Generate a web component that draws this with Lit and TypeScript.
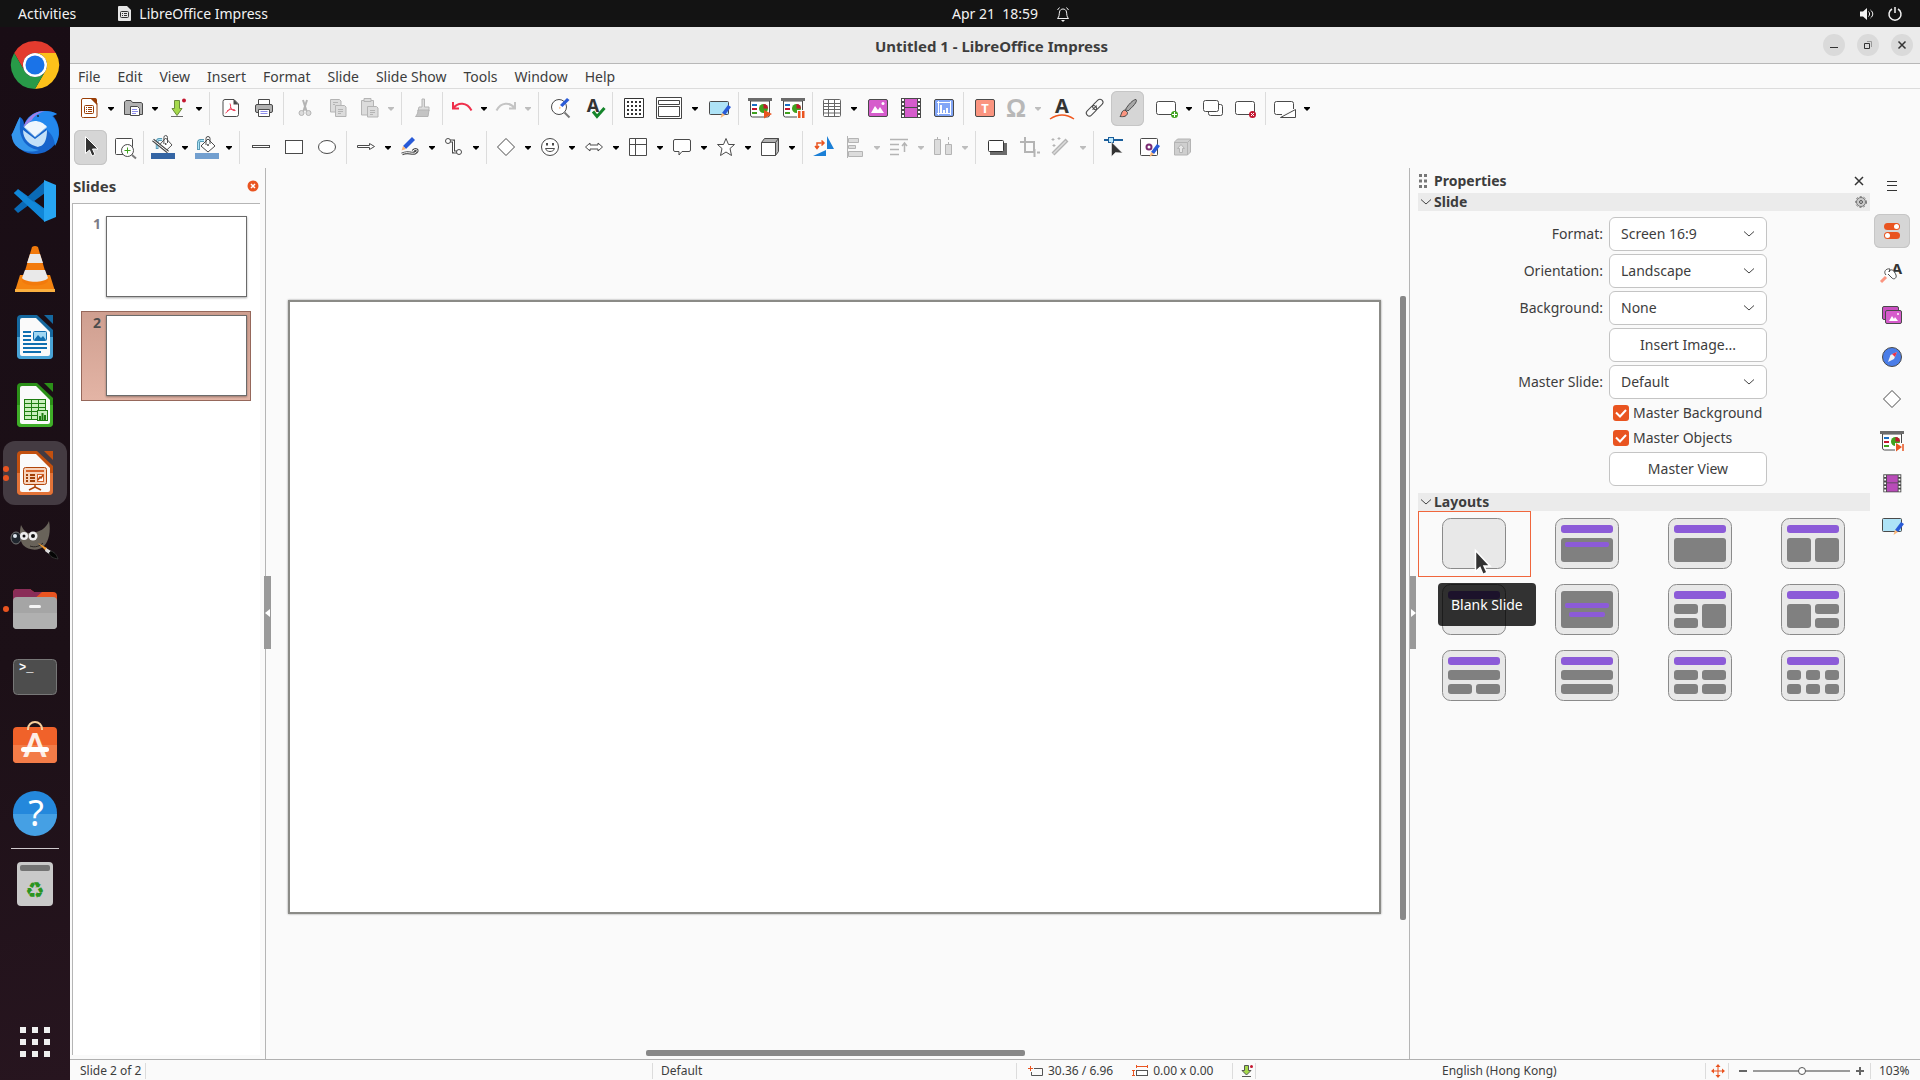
import { LitElement, html, svg, css, nothing } from "lit";
import { customElement, property } from "lit/decorators.js";
import { classMap } from "lit/directives/class-map.js";

const K = "#4a4a4a";
const G = "#b4b4b4";
const GF = "#dcdcdc";
const BLUE = "#2a5bd7";

const pencil = (x: number, y: number) => svg`<g transform="translate(${x} ${y})"><path d="M9 0l3 2-6 8-3-2z" fill=${BLUE}/><path d="M3 8l3 2-4.500 3z" fill="#fcb878"/></g>`;
const board = svg`<path d="M2.500 5v14a2 2 0 0 0 2 2h15a2 2 0 0 0 2-2V5z" fill="#fff" stroke=${K}/><path d="M0 2h24v3H0z" fill="#6b6b6b"/><path d="M4 8h5v2H4z" fill="#1a6fc4"/><path d="M4 12h5v2H4z" fill="#c3162f"/><path d="M4 16h5v2H4z" fill="#3fa21e"/><circle cx="15.500" cy="12.500" r="4.500" fill="#3fa21e"/><path d="M15.500 12.500V8a4.500 4.500 0 0 1 4.500 4.500z" fill="#c3162f"/>`;
const picture = svg`<path d="M3 17l4-7 3 4 2-3 4 6z" transform="translate(2 0)" fill="#fff"/><circle cx="17" cy="7.500" r="1.500" fill="#fff"/>`;
const bucket = svg`<path d="M3.500 15V7.500a2 2 0 0 1 2-2H9" fill="none" stroke="#5a9bb5" stroke-width="3"/><path d="M3.500 14V7.500a2 2 0 0 1 2-2H9" fill="none" stroke="#aee6fb"/><path d="M13 4l7 7-7 6-7-6z" fill="#fff" stroke=${K}/><path d="M11 10V3.500a2 2 0 0 1 4 0V9" fill="none" stroke=${K}/><circle cx="13" cy="10" r="1" fill=${K}/>`;
const film = (c: string) => svg`<path d="M2 2h20v20H2z" fill=${K}/><path d="M6 3h12v8H6zM6 12h12v9H6z" fill=${c}/><path d="M4 3v18M20 3v18" stroke="#fff" stroke-width="2" stroke-dasharray="2 2"/>`;
const noteScreen = svg`<rect x="2.500" y="5.500" width="19" height="13" rx="1" fill="#aee3f7" stroke=${K}/>${pencil(12, 9)}`;

const icons: Record<string, unknown> = {
  new: svg`<path d="M6 2.500h9l5 5V20a1.500 1.500 0 0 1-1.500 1.500h-12A1.500 1.500 0 0 1 4.500 20V4A1.500 1.500 0 0 1 6 2.500z" fill="#fff" stroke="#9a3e06"/><path d="M13 2h5.500A2 2 0 0 1 20 4v5z" fill="#9a3e06"/><rect x="7.500" y="9.500" width="9" height="8" rx="1" fill="none" stroke="#9a3e06"/><path d="M9 11.500h1M11 11.500h4M9 13.500h1M11 13.500h4M9 15.500h1M11 15.500h4" stroke="#9a3e06"/>`,
  open: svg`<path d="M3.500 18.500V6l1.500-1.500h5l1.500 2H20l1.500 1V18.500z" fill="#b2b2b2" stroke=${K}/><path d="M9.500 10.500h7l2 2v7h-9z" fill="#fff" stroke=${K}/><path d="M11 13.500h5M11 15.500h6M11 17.500h4" stroke="#8d8dea"/>`,
  save: svg`<path d="M9.500 4.500h5v8h2.500l-5 7-5-7h2.500z" fill="#a4d94b" stroke="#6a8a3a"/><path d="M6 20.500h12" stroke="#6b6b6b"/><circle cx="19" cy="4.500" r="2" fill="#c3162f"/>`,
  pdf: svg`<path d="M6 3.500h9l4.500 4.500v10.500a2 2 0 0 1-2 2H6a2 2 0 0 1-2-2v-13a2 2 0 0 1 2-2z" fill="#fff" stroke=${K}/><path d="M14.500 3v5.500h5z" fill=${K}/><path d="M11 7.500c1.500 4 .5 6-4.500 9.500M11.500 11c1 3 3 4 5 3.500M8 15c2-2 5-2 8-1" fill="none" stroke="#ee3e58"/>`,
  print: svg`<path d="M6.500 9V3.500h11V9" fill="#fff" stroke=${K}/><rect x="3.500" y="8.500" width="17" height="8" rx="1.500" fill="#b2b2b2" stroke=${K}/><path d="M6.500 13.500h11v7h-11z" fill="#fff" stroke=${K}/><path d="M8.500 15.500h7M8.500 17.500h7" stroke="#8d8dea"/>`,
  cut: svg`<path d="M10 4l3.500 11M14 4l-3.500 11" stroke=${G} stroke-width="2"/><circle cx="8.500" cy="17" r="2.500" fill=${GF} stroke=${G}/><circle cx="15.500" cy="17" r="2.500" fill=${GF} stroke=${G}/>`,
  copy: svg`<path d="M4.500 3.500h9l1.500 1.500v11H4.500z" fill=${GF} stroke=${G}/><path d="M9.500 9.500h9l1.500 1.500v9.500H9.500z" fill=${GF} stroke=${G}/><path d="M7 6.500h5M7 8.500h2M12 13.500h5M12 15.500h5M12 17.500h3" stroke=${G}/>`,
  paste: svg`<path d="M4.500 4.500h12V19h-12z" fill=${GF} stroke=${G}/><path d="M7 2.500h7v3H7z" fill=${GF} stroke=${G}/><path d="M10.500 10.500h9l1.500 1.500v9H10.500z" fill=${GF} stroke=${G}/><path d="M13 14.500h5M13 16.500h5M13 18.500h3" stroke=${G}/>`,
  clone: svg`<path d="M11 3h2.500v8H18v4H7l1-4h3z" fill=${GF} stroke=${G}/><path d="M7 14h11l-1 6.500H4.500C6 19 7 17 7 14z" fill="#c4c4c4" stroke=${G}/>`,
  undo: svg`<path d="M3 6v6.500h6M3.500 12C8 6 17 6 21.500 14.500" fill="none" stroke="#ef2f4b" stroke-width="2"/>`,
  redo: svg`<path d="M21 6v6.500h-6M20.500 12C16 6 7 6 2.500 14.500" fill="none" stroke="#c4c4c4" stroke-width="2"/>`,
  find: svg`<circle cx="11" cy="11" r="7.500" fill="#fff" stroke=${K}/><path d="M16.500 16.500l5 5" stroke="#7a7a7a" stroke-width="2"/><path d="M13 12l-2 1 .5-2.500z" fill="#fcb878"/><path d="M12 9l7-7 2.500 2-7 7z" fill=${BLUE}/>`,
  spell: svg`<text x="12" y="16" font-size="18" font-weight="bold" fill="#333" text-anchor="middle" style="font-family:'Noto Sans',sans-serif">A</text><path d="M12 15.500l4 5L23.500 12" fill="none" stroke="#15852b" stroke-width="3"/>`,
  grid: svg`<path d="M2.500 2.500h19v19h-19z" fill="#fff" stroke="#333"/><path d="M5 6h14M5 10h14M5 14h14M5 18h14" stroke="#333" stroke-width="2" stroke-dasharray="2 2"/>`,
  display: svg`<path d="M-.5 1.500h25v21h-25zM1.500 4.500h21v4h-21zM1.500 10.500h21v10h-21z" fill="#fff" stroke="#444"/>`,
  master: noteScreen,
  play: svg`${board}<path d="M16 14l8 4-8 4.500z" fill="#e95420"/>`,
  pause: svg`${board}<path d="M16 14h8v9h-8z" fill="#fafafa"/><path d="M17 15h2.500v7H17zM21 15h2.500v7H21z" fill="#e95420"/>`,
  table: svg`<rect x="3.500" y="3.500" width="17" height="17" rx="1" fill="#fff" stroke="#666"/><path d="M4 7.500h16M4 10.500h16M4 13.500h16M4 17h16M8.500 4v16M14.500 4v16" stroke="#666"/>`,
  image: svg`<rect x="2.500" y="3.500" width="19" height="17" rx="1.500" fill="#d65ccc" stroke=${K}/>${picture}`,
  film: film("#d65ccc"),
  chart: svg`<rect x="2.500" y="3.500" width="19" height="17" rx="1.500" fill="#82a6f7" stroke=${K}/><path d="M5 6.500h14M5 17.500h14M6.500 5v14M18.500 5v14" stroke="#fff"/><path d="M9 17V9M12 17v-3M15 17v-5" stroke="#fff" stroke-width="2"/>`,
  textbox: svg`<rect x="2.500" y="3.500" width="19" height="17" rx="1.500" fill="#fb9580" stroke=${K}/><text x="12" y="17" font-size="13" font-weight="bold" fill="#fff" text-anchor="middle" style="font-family:'Noto Sans',sans-serif">T</text>`,
  omega: svg`<text x="12" y="21" font-size="25" font-weight="bold" fill="#b8b8b8" text-anchor="middle" style="font-family:'Liberation Sans',sans-serif">Ω</text>`,
  fontwork: svg`<text x="12" y="16.500" font-size="20" font-weight="bold" fill="#333" text-anchor="middle" style="font-family:'Noto Sans',sans-serif">A</text><path d="M0 23q12-8 24 0" fill="none" stroke="#f0561d" stroke-width="1.500"/>`,
  link: svg`<g transform="rotate(-45 12 12)" fill="none" stroke=${K}><rect x="1.500" y="8.500" width="12" height="6" rx="3"/><rect x="10.500" y="8.500" width="12" height="6" rx="3"/><path d="M9 11.500h6"/></g>`,
  brush: svg`<path d="M9.500 13.500C12 9 17 3.500 20 3.500c2 2-3.500 7.500-8 11.500z" fill="#a8a8a8" stroke=${K}/><path d="M4 20.500c1.500-1 1-6 5-6.500l2.500 2.500c0 4-4 4.500-7.500 4z" fill="#fb9580" stroke=${K}/>`,
  newslide: svg`<rect x="1.500" y="5.500" width="19" height="13" rx="2" fill="#fff" stroke=${K}/><circle cx="19.500" cy="18.500" r="3.500" fill="#3fa21e"/><path d="M19.500 16v5M17 18.500h5" stroke="#fff"/>`,
  dup: svg`<rect x="7.500" y="8.500" width="14" height="11" rx="2" fill="#fff" stroke=${K}/><rect x="2.500" y="4.500" width="15" height="11" rx="2" fill="#fff" stroke=${K}/>`,
  del: svg`<rect x="1.500" y="5.500" width="19" height="13" rx="2" fill="#fff" stroke=${K}/><circle cx="18.500" cy="18.500" r="3.500" fill="#c3162f"/><path d="M17 17l3 3m0-3l-3 3" stroke="#fff"/>`,
  layout: svg`<path d="M9 18.500H3.500a2 2 0 0 1-2-2v-9a2 2 0 0 1 2-2h15a2 2 0 0 1 2 2V13" fill="#fff" stroke=${K}/><path d="M7.500 21.500h15V13.500z" fill="#fff" stroke=${K}/>`,

  select: svg`<path d="M6.500 1.500v17l4-3.500 2.500 6 3-1.500-2.500-5.500h5.500z" fill="#333" stroke="#fff"/>`,
  zoom: svg`<rect x="3.500" y="3.500" width="17" height="16" rx="1" fill="#fff" stroke=${K}/><circle cx="15.500" cy="15.500" r="6" fill="#fff" stroke=${K}/><path d="M12.500 15.500h6M15.500 12.500v6" stroke="#3fa21e"/><path d="M20 20l4 3.500" stroke="#7a7a7a" stroke-width="2"/>`,
  linecolor: svg`<g transform="translate(3 -1) scale(.9 1)">${bucket}</g><path d="M2 5l15 12" stroke=${K} stroke-width="3"/><path d="M2 5l15 12" stroke="#fff"/><path d="M0 18h24v6H0z" fill="#3465a4"/>`,
  fillcolor: svg`${bucket}<path d="M0 18h24v6H0z" fill="#729fcf"/>`,
  line: svg`<rect x="3.500" y="10.500" width="17" height="2" fill="#fff" stroke=${K}/>`,
  rect: svg`<rect x="3.500" y="5.500" width="17" height="13" fill="#fff" stroke=${K}/>`,
  ellipse: svg`<ellipse cx="12" cy="12" rx="8.500" ry="6.500" fill="#fff" stroke=${K}/>`,
  arrow: svg`<path d="M3.500 10.500h12v-2l5 3-5 3v-2h-12z" fill="#fff" stroke=${K}/>`,
  curve: svg`<path d="M4 19c5-3 9 0 13-1 5-3 0-5-2-2" fill="none" stroke=${K} stroke-width="3"/><path d="M4 19c5-3 9 0 13-1 5-3 0-5-2-2" fill="none" stroke="#fff"/><path d="M14 2l3 3-9 9-3-3z" fill=${BLUE}/><path d="M5 11l3 3-4.500 1.500z" fill="#fcb878"/>`,
  connector: svg`<path d="M7 6h4.500v11H16" fill="none" stroke=${K} stroke-width="3"/><path d="M7 6h4.500v11H16" fill="none" stroke="#fff"/><circle cx="6" cy="6" r="2.500" fill="#fff" stroke=${K}/><circle cx="17" cy="17" r="2.500" fill="#fff" stroke=${K}/>`,
  diamond: svg`<path d="M12 3.500l8.500 8.500-8.500 8.500L3.500 12z" fill="#fff" stroke=${K}/>`,
  smile: svg`<circle cx="12" cy="12" r="8.500" fill="#fff" stroke=${K}/><path d="M9 8v2.500M15 8v2.500" stroke=${K} stroke-width="2"/><path d="M7.500 13.500h9c-1 4-8 4-9 0z" fill="#fff" stroke=${K}/>`,
  dbl: svg`<path d="M3.500 12L8 8v2h8V8l4.500 4L16 16v-2H8v2z" fill="#fff" stroke=${K}/>`,
  flow: svg`<path d="M3.500 3.500h17v17h-17zM9.500 3.500v17M3.500 9.500h17" fill="#fff" stroke=${K}/>`,
  callout: svg`<path d="M5 4.500h14a1.500 1.500 0 0 1 1.500 1.500v9a1.500 1.500 0 0 1-1.500 1.500h-7L9 20v-3.500H5A1.500 1.500 0 0 1 3.500 15V6A1.500 1.500 0 0 1 5 4.500z" fill="#fff" stroke=${K}/>`,
  star: svg`<path d="M12 3.500l2.500 6h6l-4.500 4 1.500 7L12 17l-5.500 3.500L8 13.500l-4.500-4h6z" fill="#fff" stroke=${K}/>`,
  cube: svg`<path d="M3.500 7.500l3-4h14v13l-3 4z" fill="#b2b2b2" stroke=${K}/><path d="M3.500 7.500h14v13h-14zM17.500 7.500l3-4" fill="#fff" stroke=${K}/>`,
  rotate: svg`<path d="M15 1v13h7zM1 21h13v-6z" fill="#1b7fd6"/><path d="M5 13V8h6M3 11l2 2.500L7 11M9.500 5.500L12 8l-2.500 2.500" fill="none" stroke="#e95420" stroke-width="1.500"/>`,
  align: svg`<path d="M4.500 1v22" stroke=${G}/><path d="M5.500 3.500h10v4h-10zM5.500 10.500h7v3h-7zM5.500 16.500h14v5h-14z" fill=${GF} stroke=${G}/>`,
  arrange: svg`<path d="M3 4.500h18M3 9.500h9M3 14.500h9M3 19.500h9" stroke=${G} stroke-width="1.500"/><path d="M17.500 17V9M15 11l2.500-3L20 11" stroke=${G} fill="none" stroke-width="1.500"/>`,
  distribute: svg`<path d="M6.500 2v20M17.500 2v20" stroke=${G} stroke-dasharray="3 2"/><path d="M3.500 4.500h6v15h-6zM14.500 9.500h6v10h-6z" fill=${GF} stroke=${G}/>`,
  shadow: svg`<path d="M5 8h17v12H5z" fill="#6b6b6b"/><rect x="3.500" y="5.500" width="15" height="11" rx="1" fill="#fff" stroke="#333"/>`,
  crop: svg`<path d="M2 7h14v10M7 2v15h9M16.500 14v8M19 17.500h3" fill="none" stroke=${G} stroke-width="2"/>`,
  wand: svg`<path d="M4 19L18 5" stroke=${G} stroke-width="4"/><path d="M4.500 18.500L17 6" stroke=${GF} stroke-width="1.500"/><path d="M4 3v3M2.500 4.500h3M10 2v3M8.500 3.500h3M5 9v3M3.500 10.500h3" stroke=${G}/>`,
  points: svg`<path d="M1 5h19" stroke="#1b5f9c" stroke-width="2"/><rect x="5.500" y="2.500" width="5" height="5" fill="#bfe9fb" stroke="#1b5f9c"/><path d="M8.500 7v14.500l4-4 7 .5z" fill="#333" stroke="#fff" stroke-width=".5"/>`,
  glue: svg`<rect x="4.500" y="3.500" width="17" height="17" rx="1" fill="#fff" stroke=${K}/><circle cx="13" cy="12" r="2.500" fill="none" stroke="#7a2a72" stroke-width="2"/>${pencil(12, 9)}`,
  extrude: svg`<g transform="translate(2 0)"><path d="M3.500 7l3-3h13v13l-3 3h-13z" fill="#cfcfcf" stroke=${G}/><path d="M3.500 7.500h13V20M16.500 7.500l3-3" fill="none" stroke=${G}/><path d="M8.500 17.500v-4h-2l3.500-4 3.500 4h-2v4z" fill="#e8e8e8" stroke=${G}/></g>`,

  menu: svg`<path d="M7 7.500h10M7 11.500h10M7 16.500h10" stroke="#333"/>`,
  props: svg`<rect x="4" y="4" width="16" height="7" rx="3.500" fill="#e95420"/><rect x="4" y="13" width="16" height="7" rx="3.500" fill="#e95420"/><circle cx="16.500" cy="7.500" r="2.500" fill="#fff"/><circle cx="7.500" cy="16.500" r="2.500" fill="#fff"/>`,
  styles: svg`<text x="17" y="13" font-size="15" font-weight="bold" fill="#333" text-anchor="middle" style="font-family:'Noto Sans',sans-serif">A</text><path d="M6 14c-3-3 0-7 4-6l-1 3c2-4 5-2 7 3 1 3-2 5-4 3l-4-4" fill="#fff" stroke=${K}/><path d="M6 16l-5 5" stroke="#fb9580" stroke-width="3"/>`,
  gallery: svg`<rect x="2.500" y="3.500" width="16" height="13" rx="1.500" fill="#c94fc0" stroke=${K}/><rect x="5.500" y="7.500" width="16" height="13" rx="1.500" fill="#d65ccc" stroke=${K}/><path d="M9 18l3-5 2 3 1-2 3 4z" fill="#fff"/><circle cx="18" cy="11" r="1" fill="#fff"/>`,
  navigator: svg`<circle cx="12" cy="12" r="9.500" fill="#4a7de8" stroke=${K}/><path d="M17 7l-3 7-6 3 2.500-7z" fill="#f2f2f2"/><path d="M17 7l-2 5-3-3z" fill="#ed3146"/>`,
  transition: svg`${board}<path d="M15 14h9v9h-9z" fill="#fafafa"/><path d="M16 14l6 4-6 4.500z" fill="#e95420"/><path d="M23 15v7" stroke="#e95420" stroke-width="1.500"/>`,
  animation: svg`<g transform="translate(1.500 1.500) scale(.9)">${film("#b84bb8")}</g>`,
};

const office = (dark: string, light: string, inner: unknown) => svg`<g transform="translate(0 -1)">
  <path d="M10 3h16l16 15v25a4 4 0 0 1-4 4H10a4 4 0 0 1-4-4V7a4 4 0 0 1 4-4z" fill=${dark}/>
  <path d="M6 25h36v18a4 4 0 0 1-4 4H10a4 4 0 0 1-4-4z" fill=${light}/>
  <path d="M11 6h14l14 14v22a2 2 0 0 1-2 2H11a2 2 0 0 1-2-2V8a2 2 0 0 1 2-2z" fill="#fafafa"/>
  <path d="M33 3h9v9z" fill=${dark}/>${inner}</g>`;

const dockIcons: Record<string, unknown> = {
  chrome: svg`<path d="M24 12H44.800A24 24 0 0 0 3.200 12L13.600 30A12 12 0 0 1 24 12z" fill="#e33b2e"/><path d="M44.800 12A24 24 0 0 1 24 48L34.400 30A12 12 0 0 0 24 12z" fill="#fcc11a"/><path d="M3.200 12A24 24 0 0 0 24 48L34.400 30A12 12 0 0 1 13.600 30z" fill="#289a48"/><circle cx="24" cy="24" r="12" fill="#fff"/><circle cx="24" cy="24" r="9.500" fill="#1a73e8"/>`,
  thunderbird: svg`<g transform="translate(0 1)"><path d="M1 24c2-3 4-10 8-17 3 2 4 4 4 8 3-8 9-13 19-14 6 0 11 1 14 3l-4 2c4 4 6 10 6 18a24 23 0 0 1-47 3c-1-2-1-3 0-3z" fill="#1664cc"/><path d="M14 13C18 5 25 1 34 1c5 0 9 1 12 3l-5 2c8 8 9 20 3 30 0-12-12-24-30-23z" fill="#2388ee"/><path d="M12 17C18 5 25 1 34 1c-7 2-11 5-13 9z" fill="#9f7fe8"/><path d="M1 24c2-3 4-10 8-17 1 6-2 12 2 21 3 7 9 11 17 12-14 5-28-3-27-16z" fill="#3596ec"/><path d="M12 20l12 9 12-9c0 8-2 14-6 16 0 0-2 0-3 1-8-2-15-7-15-17z" fill="#c3e0f8"/><path d="M13 17c3-4 7-6 11-6s9 2 12 6l-12 10z" fill="#eef6fd"/><path d="M13 17l11 10 12-10" fill="none" stroke="#8fbdea"/><circle cx="27" cy="6" r="1" fill="#123"/></g>`,
  vscode: svg`<path d="M3 16l4-4 27 20v12z" fill="#0f7fd0"/><path d="M34 4v12L7 36l-4-4z" fill="#0a6ab6"/><path d="M33 3l12 5v32l-12 5z" fill="#27a5f2"/><path d="M3 16l4-3 26 20v11z" fill="#1187d8"/>`,
  vlc: svg`<path d="M9 30h30l5 16H4z" fill="#f58410"/><path d="M4 44h40v3H4z" fill="#fbb040"/><path d="M21 2q3-2 6 0l10 34c-3 6-23 6-26 0z" fill="#f27a0c"/><path d="M19 9h10l3 9H16zM14 25h20l3 8c-4 5-22 5-26 0z" fill="#e9e9e9"/>`,
  writer: office("#15689f", "#49a3d6", svg`<path d="M12 20h8M12 24h8M12 28h8M12 32h24M12 36h24M12 40h18" stroke="#0f6fb0" stroke-width="2"/><rect x="22.500" y="19.500" width="13" height="9" rx="1" fill="#9fd7f3" stroke="#0f6fb0"/><path d="M23 28l4-5 3 3 2-2 3 4z" fill="#0f6fb0"/>`),
  calc: office("#2b9018", "#3fae28", svg`<rect x="13.500" y="19.500" width="21" height="20" fill="#c9efbd" stroke="#1e7d10"/><path d="M14 23.500h20M14 27.500h20M14 31.500h20M14 35.500h20M20.500 20v19M27.500 20v19" stroke="#1e7d10"/><rect x="26.500" y="30.500" width="10" height="10" fill="#c9efbd" stroke="#1e7d10"/><path d="M29 40v-4M31.500 40v-7M34 40v-5" stroke="#1e7d10" stroke-width="2"/>`),
  impress: office("#c2500f", "#e27338", svg`<rect x="12.500" y="19.500" width="23" height="17" rx="2" fill="#f7d3bb" stroke="#b0450a"/><path d="M15 23h18" stroke="#d4622a" stroke-width="2"/><path d="M15 27h2M15 30h2M15 33h2M19 27h5M19 30h5M19 33h5" stroke="#a04008" stroke-width="2"/><rect x="26.500" y="26.500" width="6" height="7" fill="#fff" stroke="#d4622a"/><path d="M27 32l2-3 1 1 2-3M24 37v2l-6 3M24 39l6 3" stroke="#b0450a" fill="none" stroke-width="1.500"/>`),
  gimp: svg`<path d="M10 8c3 6 6 9 11 8 7-1 14-4 17-12 2 10 0 20-5 25-6 6-16 4-21-1-3-4-4-12-2-20z" fill="#69635a"/><ellipse cx="5" cy="21" rx="5" ry="6" fill="#20262e" stroke="#777"/><circle cx="4" cy="19" r="2" fill="#dfe8f0"/><circle cx="13" cy="19" r="4" fill="#eee"/><circle cx="13" cy="19" r="1.500" fill="#111"/><circle cx="22" cy="19" r="4.500" fill="#eee"/><circle cx="22" cy="19" r="2" fill="#111"/><path d="M19 29c5 2 10 0 13-3" fill="none" stroke="#2a2622"/><path d="M27 26l9 5-1 3z" fill="#f29a2e"/><path d="M35 31l5 3-2 3-4-3z" fill="#ddd"/><path d="M40 34c5 2 6 5 7 8-5-1-8-2-9-6z" fill="#050505" stroke="#333"/>`,
  files: svg`<path d="M2 8a4 4 0 0 1 4-4h13l4 3h19a4 4 0 0 1 4 4v15H2z" fill="#e95420"/><path d="M2 8a4 4 0 0 1 4-4h13l4 3h8L12 24H2z" fill="#8a2d58"/><rect x="2" y="12" width="44" height="32" rx="4" fill="#a5a5a5"/><path d="M2 28h44v12a4 4 0 0 1-4 4H6a4 4 0 0 1-4-4z" fill="#b0b0b0"/><rect x="18" y="20" width="12" height="3" rx="1.500" fill="#f5f5f5"/>`,
  terminal: svg`<rect x="2.500" y="6.500" width="43" height="35" rx="4" fill="#4d4d4d" stroke="#777"/><text x="8" y="18" font-size="12" font-weight="bold" fill="#fff" style="font-family:'Liberation Mono',monospace">&gt;_</text>`,
  software: svg`<g transform="translate(0 -5)"><rect x="2" y="11" width="44" height="36" rx="4" fill="#f0622a"/><path d="M2 29h44v14a4 4 0 0 1-4 4H6a4 4 0 0 1-4-4z" fill="#f37c48"/><path d="M17 14v-1a7 7 0 0 1 14 0v1" fill="none" stroke="#f7cf9d" stroke-width="2"/><text x="24" y="41" font-size="33" font-weight="bold" fill="#fdeee6" text-anchor="middle" style="font-family:Lato,sans-serif">A</text><rect x="10" y="31" width="28" height="5" rx="2.500" fill="#fff"/></g>`,
  help: svg`<circle cx="24" cy="24" r="22" fill="#2488dc"/><path d="M2 25h44a22 22 0 0 1-44 0z" fill="#45a0e4"/><text x="25" y="37" font-size="36" fill="#fff" text-anchor="middle" style="font-family:'Noto Sans',sans-serif">?</text>`,
  trash: svg`<rect x="6" y="2" width="36" height="44" rx="4" fill="#c9c9c9"/><rect x="9" y="5" width="30" height="6" rx="2" fill="#737373"/><text x="24" y="38" font-size="22" fill="#2a9420" text-anchor="middle" style="font-family:'DejaVu Sans',sans-serif">♻</text>`,
  apps: svg`<path d="M9 12h30M9 24h30M9 36h30" stroke="#f0f0f0" stroke-width="6" stroke-dasharray="6 6"/>`,
};

type Tool = { icon?: string; label?: string; kind: "button" | "drop" | "wide" | "sep" | "space"; off?: boolean; on?: boolean };
const b = (icon: string, label: string, x: Partial<Tool> = {}): Tool => ({ kind: "button", icon, label, ...x });
const d = (icon: string, label: string, x: Partial<Tool> = {}): Tool => ({ kind: "drop", icon, label, ...x });
const sep: Tool = { kind: "sep" };
const off = { off: true };

const standardBar: Tool[] = [
  d("new", "New"), d("open", "Open"), d("save", "Save"), sep,
  b("pdf", "Export as PDF"), b("print", "Print"), sep,
  b("cut", "Cut", off), b("copy", "Copy", off), d("paste", "Paste", off), sep,
  b("clone", "Clone Formatting", off), sep,
  d("undo", "Undo"), d("redo", "Redo", off), sep,
  b("find", "Find and Replace"), b("spell", "Spelling"), sep,
  b("grid", "Display Grid"), d("display", "Display Views", { kind: "wide" }), b("master", "Master Slide"), sep,
  b("play", "Start from First Slide"), b("pause", "Start from Current Slide"), sep,
  d("table", "Table"), b("image", "Insert Image"), b("film", "Insert Audio or Video"), b("chart", "Insert Chart"), sep,
  b("textbox", "Insert Text Box"), d("omega", "Special Characters", off), b("fontwork", "Fontwork"), b("link", "Hyperlink"),
  b("brush", "Show Draw Functions", { on: true }), { kind: "space" },
  d("newslide", "New Slide"), b("dup", "Duplicate Slide"), b("del", "Delete Slide"), sep,
  d("layout", "Slide Layout"),
];
const drawingBar: Tool[] = [
  b("select", "Select", { on: true }), b("zoom", "Zoom & Pan"), sep,
  d("linecolor", "Line Color"), d("fillcolor", "Fill Color"), sep,
  b("line", "Line"), b("rect", "Rectangle"), b("ellipse", "Ellipse"), sep,
  d("arrow", "Lines and Arrows"), d("curve", "Curves and Polygons"), d("connector", "Connectors"), sep,
  d("diamond", "Basic Shapes"), d("smile", "Symbol Shapes"), d("dbl", "Block Arrows"), d("flow", "Flowchart"),
  d("callout", "Callouts"), d("star", "Stars and Banners"), d("cube", "3D Objects"), sep,
  b("rotate", "Rotate"), d("align", "Align", off), d("arrange", "Arrange", off), d("distribute", "Distribute", off), sep,
  b("shadow", "Shadow"), b("crop", "Crop", off), d("wand", "Filter", off), sep,
  b("points", "Edit Points"), b("glue", "Glue Points"), b("extrude", "Toggle Extrusion", off),
];

const dockItems = [
  ["chrome", "Google Chrome"], ["thunderbird", "Thunderbird"], ["vscode", "Visual Studio Code"], ["vlc", "VLC"],
  ["writer", "LibreOffice Writer"], ["calc", "LibreOffice Calc"], ["impress", "LibreOffice Impress"], ["gimp", "GIMP"],
  ["files", "Files"], ["terminal", "Terminal"], ["software", "Ubuntu Software"], ["help", "Help"],
];

/* Each layout is a list of [kind, x, y, width, height] blocks on a 64 x 51 card. */
type Block = ["p" | "g", number, number, number, number];
const title: Block = ["p", 6, 7, 52, 8];
const layouts: [string, Block[]][] = [
  ["Blank Slide", []],
  ["Title Slide", [title, ["g", 6, 20, 52, 24], ["p", 10, 24, 44, 5]]],
  ["Title, Content", [title, ["g", 6, 20, 52, 24]]],
  ["Title and 2 Content", [title, ["g", 6, 20, 24, 24], ["g", 34, 20, 24, 24]]],
  ["Title Only", [title]],
  ["Centered Text", [["g", 6, 7, 52, 37], ["p", 10, 19, 44, 5], ["p", 14, 28, 36, 5]]],
  ["Title, 2 Content and Content", [title, ["g", 6, 20, 24, 10], ["g", 6, 34, 24, 10], ["g", 34, 20, 24, 24]]],
  ["Title, Content and 2 Content", [title, ["g", 6, 20, 24, 24], ["g", 34, 20, 24, 10], ["g", 34, 34, 24, 10]]],
  ["Title, Content over 2 Content", [title, ["g", 6, 20, 52, 10], ["g", 6, 34, 24, 10], ["g", 34, 34, 24, 10]]],
  ["Title, Content over Content", [title, ["g", 6, 20, 52, 10], ["g", 6, 34, 52, 10]]],
  ["Title, 4 Content", [title, ["g", 6, 20, 24, 10], ["g", 34, 20, 24, 10], ["g", 6, 34, 24, 10], ["g", 34, 34, 24, 10]]],
  ["Title, 6 Content", [title, ...[20, 34].flatMap((y) => [6, 25, 44].map((x): Block => ["g", x, y, 14, 10]))]],
];

const shared = css`
  * { box-sizing: border-box; }
  button, select, input { font: inherit; color: inherit; margin: 0; padding: 0; border: 0; background: none; }
  svg { display: block; flex: none; overflow: visible; }
`;

@customElement("tool-bar")
class ToolBar extends LitElement {
  @property({ attribute: false }) items: Tool[] = [];
  static styles = [shared, css`
    :host { display: block; }
    .bar { display: flex; height: 35px; align-items: center; }
    .tool { display: flex; align-items: center; justify-content: center; flex: none; width: 33px; height: 35px; padding: 0 0 1px 1px; border-radius: 6px; }
    .tool.drop { width: 30px; padding-left: 0; }
    .tool.wide { width: 38px; }
    .tool.on { background: #d6d6d6; box-shadow: inset 0 0 0 1px #c6c6c6; }
    .more { display: flex; align-items: center; justify-content: center; flex: none; width: 14px; height: 35px; padding-bottom: 1px; color: #000; }
    .more[disabled] { color: #bdbdbd; }
    .sep { flex: none; width: 1px; height: 33px; margin: 0 4px 0 3px; background: #dcdcdc; }
    .space { flex: none; width: 8px; }
  `];
  render() {
    return html`<div class="bar" role="toolbar">${this.items.map((t) => {
      if (t.kind === "sep") return html`<span class="sep"></span>`;
      if (t.kind === "space") return html`<span class="space"></span>`;
      const drop = t.kind !== "button";
      return html`<button class=${classMap({ tool: true, drop, wide: t.kind === "wide", on: !!t.on })} aria-label=${t.label!} ?disabled=${!!t.off}>
          <svg width="24" height="24" viewBox="0 0 24 24">${icons[t.icon!]}</svg></button>
        ${drop ? html`<button class="more" aria-label="${t.label} options" ?disabled=${!!t.off}>
          <svg width="8" height="8" viewBox="0 0 8 8"><path d="M1 3h6v1L4 7 1 4z" fill="currentColor"/></svg></button>` : nothing}`;
    })}</div>`;
  }
}

@customElement("side-dock")
class SideDock extends LitElement {
  static styles = [shared, css`
    :host { display: block; flex: none; width: 70px; background: linear-gradient(170deg, #190d15 0%, #1c1017 60%, #27151f 100%); }
    .dock { display: flex; flex-direction: column; align-items: center; height: 100%; padding: 6px 0 6px; gap: 4px; }
    .app { position: relative; display: flex; align-items: center; justify-content: center; flex: none; width: 64px; height: 64px; border-radius: 12px; }
    .app.on { background: #443b42; }
    .dots { position: absolute; left: 0; display: grid; gap: 3px; }
    .dot { width: 6px; height: 6px; border-radius: 50%; background: #e95420; }
    .rule { flex: none; width: 48px; height: 1px; margin: -1px 0; background: #cfcacd; }
    .apps { margin-top: auto; }
  `];
  render() {
    const dots: Record<string, number> = { impress: 2, files: 1 };
    return html`<nav class="dock" aria-label="Dock">
      ${dockItems.map(([id, label]) => html`<button class=${classMap({ app: true, on: id === "impress" })} aria-label=${label}>
        ${dots[id] ? html`<span class="dots">${Array.from({ length: dots[id] }, () => html`<span class="dot"></span>`)}</span>` : nothing}
        <svg width="48" height="48" viewBox="0 0 48 48">${dockIcons[id]}</svg></button>`)}
      <span class="rule"></span>
      <button class="app" aria-label="Trash"><svg width="48" height="48" viewBox="0 0 48 48">${dockIcons.trash}</svg></button>
      <button class="app apps" aria-label="Show Applications"><svg width="48" height="48" viewBox="0 0 48 48">${dockIcons.apps}</svg></button>
    </nav>`;
  }
}

@customElement("slide-panel")
class SlidePanel extends LitElement {
  static styles = [shared, css`
    :host { display: flex; flex-direction: column; flex: none; width: 196px; border-right: 1px solid #b5b5b5; padding: 0 5px 4px 2px; position: relative; }
    .head { display: flex; align-items: center; justify-content: space-between; height: 35px; padding: 0 1px; font-size: 15px; font-weight: bold; }
    .list { flex: 1; padding: 8px; width: 188px; background: #fff; border-top: 1px solid #b5b5b5; border-left: 1px solid #b5b5b5; display: flex; flex-direction: column; gap: 9px; }
    .item { display: grid; grid-template-columns: 16px 141px; column-gap: 5px; width: 170px; height: 90px; padding: 3px; border: 1px solid transparent; text-align: right; font-weight: bold; line-height: 16px; color: #7b7b88; align-items: start; }
    .item.on { color: #4d4d4d; border-color: #96685b; background: linear-gradient(#cf9f90, #e3b4a5); }
    .thumb { width: 141px; height: 81px; background: #fff; border: 1px solid #6b6b6b; box-shadow: 0 1px 2px #00000059; }
    .grab { position: absolute; right: -6px; top: 408px; width: 7px; height: 73px; background: #999; display: flex; align-items: center; justify-content: center; }
  `];
  render() {
    return html`<div class="head"><span>Slides</span>
        <button aria-label="Close slide panel"><svg width="12" height="12" viewBox="0 0 12 12"><circle cx="6" cy="6" r="5.500" fill="#e95420"/><path d="M4 4l4 4m0-4L4 8" stroke="#fff" stroke-width="1.500"/></svg></button></div>
      <div class="list">${[1, 2].map((n) => html`<button class=${classMap({ item: true, on: n === 2 })}><span>${n}</span><span class="thumb"></span></button>`)}</div>
      <button class="grab" aria-label="Hide slide panel"><svg width="7" height="8" viewBox="0 0 7 8"><path d="M1 4l5-4v8z" fill="#fff"/></svg></button>`;
  }
}

@customElement("property-panel")
class PropertyPanel extends LitElement {
  static styles = [shared, css`
    :host { display: flex; flex: none; width: 511px; border-left: 1px solid #b5b5b5; padding-left: 8px; position: relative; }
    .deck { width: 452px; }
    .head { display: flex; align-items: center; height: 25px; gap: 6px; font-weight: bold; padding-right: 4px; }
    .head button { margin-left: auto; }
    .section { display: flex; align-items: center; height: 18px; margin: 0; padding: 0 3px; gap: 3px; background: #ebebeb; font-size: 14px; font-weight: bold; line-height: 18px; }
    .section button { margin-left: auto; }
    .form { display: grid; grid-template-columns: 185px 158px; column-gap: 6px; row-gap: 3px; align-items: center; padding: 6px 0 7px; }
    .form > label { text-align: right; }
    .field { grid-column: 2; display: grid; align-items: center; height: 34px; border: 1px solid #c4c4c4; border-radius: 6px; background: #fff; }
    .field > * { grid-area: 1 / 1; }
    .field select { appearance: none; width: 100%; height: 32px; padding: 0 11px; }
    .field svg { justify-self: end; margin-right: 12px; pointer-events: none; }
    .push { text-align: center; }
    .checks { grid-column: 2; display: grid; gap: 9px; padding: 3px 0 3px 4px; }
    .check { display: grid; grid-template-columns: 16px 1fr; column-gap: 4px; align-items: center; height: 16px; line-height: 16px; white-space: nowrap; }
    .check input { appearance: none; grid-area: 1 / 1; width: 16px; height: 16px; border-radius: 3px; background: #e95420; }
    .check svg { grid-area: 1 / 1; pointer-events: none; }
    .layouts { display: grid; grid-template-columns: repeat(4, 1fr); }
    .cell { position: relative; display: flex; justify-content: center; height: 66px; padding: 6px 1px 0 0; border: 1px solid transparent; }
    .cell.on { border-color: #f0663c; z-index: 1; }
    .pointer { position: absolute; left: 55px; top: 37px; }
    .tip { position: absolute; left: 19px; top: 71px; padding: 12px 13px; border-radius: 4px; background: #000c; color: #fff; line-height: 19px; white-space: nowrap; }
    .tabs { display: flex; flex-direction: column; align-items: center; gap: 8px; padding: 4px 0 0; width: 44px; }
    .tab { display: flex; align-items: center; justify-content: center; width: 36px; height: 34px; border-radius: 6px; }
    .tab:first-child { height: 28px; margin-bottom: 6px; }
    .tab.on { background: #d6d6d6; box-shadow: inset 0 0 0 1px #c6c6c6; }
    .grab { position: absolute; left: 0; top: 408px; width: 6px; height: 73px; background: #999; display: flex; align-items: center; justify-content: center; }
  `];
  private caret = html`<svg width="10" height="6" viewBox="0 0 10 6"><path d="M0 .5l5 4.500 5-4.500" fill="none" stroke="#444"/></svg>`;
  private select(id: string, label: string, value: string) {
    return html`<label for=${id}>${label}</label><span class="field"><select id=${id}><option>${value}</option></select>${this.caret}</span>`;
  }
  private check(label: string) {
    return html`<label class="check"><input type="checkbox" checked /><svg width="16" height="16" viewBox="0 0 16 16"><path d="M3 7.500l4 4L13 5" fill="none" stroke="#fff" stroke-width="2"/></svg>${label}</label>`;
  }
  render() {
    const tabs = [["menu", "Sidebar Settings"], ["props", "Properties"], ["styles", "Styles"], ["gallery", "Gallery"], ["navigator", "Navigator"], ["diamond", "Shapes"], ["transition", "Slide Transition"], ["animation", "Animation"], ["master", "Master Slides"]];
    return html`
      <div class="deck">
        <div class="head"><svg width="10" height="14" viewBox="0 0 10 14"><path d="M2.500 0v14M7.500 0v14" stroke="#777" stroke-width="3" stroke-dasharray="3 2.500"/></svg><span>Properties</span>
          <button aria-label="Close sidebar"><svg width="14" height="14" viewBox="0 0 14 14"><path d="M3 3l8 8m0-8l-8 8" stroke="#333" stroke-width="1.500"/></svg></button></div>
        <h2 class="section">${this.caret}<span>Slide</span>
          <button aria-label="Slide options"><svg width="12" height="12" viewBox="0 0 12 12"><circle cx="6" cy="6" r="4.500" fill="#ccc" stroke="#777" /><circle cx="6" cy="6" r="5.500" fill="none" stroke="#777" stroke-dasharray="2 2"/><circle cx="6" cy="6" r="1.500" fill="none" stroke="#555"/></svg></button></h2>
        <div class="form">
          ${this.select("format", "Format:", "Screen 16:9")}
          ${this.select("orientation", "Orientation:", "Landscape")}
          ${this.select("background", "Background:", "None")}
          <button class="field push">Insert Image...</button>
          ${this.select("master", "Master Slide:", "Default")}
          <div class="checks">${this.check("Master Background")}${this.check("Master Objects")}</div>
          <button class="field push">Master View</button>
        </div>
        <h2 class="section">${this.caret}<span>Layouts</span></h2>
        <div class="layouts">${layouts.map(([name, blocks], i) => html`<button class=${classMap({ cell: true, on: i === 0 })} aria-label=${name}>
          <svg width="64" height="51" viewBox="0 0 64 51"><rect x=".5" y=".5" width="63" height="50" rx="8" fill="#e8e8e8" stroke="#8a8a8a"/>
            ${blocks.map(([k, x, y, w, h]) => svg`<rect x=${x} y=${y} width=${w} height=${h} rx=${h < 8 ? 2 : 3} fill=${k === "p" ? "#8c5bd8" : "#808080"}/>`)}</svg>
          ${i === 0 ? html`<span class="tip" role="tooltip">Blank Slide</span>
            <svg class="pointer" width="18" height="28" viewBox="0 0 18 28"><path d="M1.500 1.500v21l4.500-4 3 7 4-2-3-6.500h6z" fill="#333" stroke="#fff" stroke-width="1.500"/></svg>` : nothing}
        </button>`)}</div>
      </div>
      <nav class="tabs" aria-label="Sidebar decks">${tabs.map(([id, label]) => html`<button class=${classMap({ tab: true, on: id === "props" })} aria-label=${label}>
        <svg width="24" height="24" viewBox="0 0 24 24">${icons[id]}</svg></button>`)}</nav>
      <button class="grab" aria-label="Hide sidebar"><svg width="7" height="8" viewBox="0 0 7 8"><path d="M6 4L1 0v8z" fill="#fff"/></svg></button>`;
  }
}

@customElement("app-root")
class AppRoot extends LitElement {
  static styles = [shared, css`
    :host { display: block; font-family: "Noto Sans", "Open Sans", sans-serif; font-size: 14px; line-height: 20px; color: #3d3d3d; }
    .screen { display: flex; flex-direction: column; height: 100vh; min-height: 1000px; background: #fafafa; }
    .top { display: grid; grid-template-columns: 1fr auto 1fr; align-items: center; flex: none; height: 27px; padding: 0 18px; background: #131313; color: #f2f2f2; }
    .top-left, .top-mid, .top-right { display: flex; align-items: center; }
    .top-left { gap: 8px; }
    .app-name { display: flex; align-items: center; gap: 8px; margin-left: 34px; }
    .top-mid { gap: 18px; padding-left: 102px; white-space: pre; }
    .top-right { gap: 14px; justify-content: flex-end; }
    .main { display: flex; flex: 1; min-height: 0; }
    .window { display: flex; flex-direction: column; flex: 1; min-width: 0; }
    .title { display: grid; grid-template-columns: 1fr auto 1fr; align-items: center; flex: none; height: 37px; padding: 0 7px 0 0; background: #ebebeb; border-bottom: 1px solid #b8b8b8; font-weight: bold; }
    .title h1 { margin: 0; grid-column: 2; font-size: 15px; line-height: 20px; padding-top: 1px; }
    .controls { display: flex; justify-content: flex-end; gap: 12px; }
    .control { display: flex; align-items: center; justify-content: center; width: 22px; height: 22px; border-radius: 50%; background: #dadada; }
    .menus { display: flex; flex: none; height: 25px; padding-top: 1px; border-bottom: 1px solid #dcdcdc; }
    .menu { padding: 0 9px 0 8px; }
    .tools { display: flex; flex-direction: column; gap: 4px; flex: none; padding: 2px 4px 3px; }
    .work { display: flex; flex: 1; min-height: 0; }
    .editor { display: grid; grid-template: 1fr 9px / 1fr 9px; flex: 1; min-width: 0; }
    .canvas { display: flex; align-items: center; padding: 0 19px 4px 22px; }
    .slide { width: 100%; aspect-ratio: 16 / 9; background: #fff; border: 2px solid #8b8b87; box-shadow: 0 0 2px #0006; }
    .vscroll { display: grid; grid-template-rows: 128fr 624fr 130fr; }
    .hscroll { display: grid; grid-template-columns: 380fr 379fr 375fr; }
    .thumb { background: #888; border-radius: 2px; }
    .vscroll .thumb { grid-row: 2; width: 6px; }
    .hscroll .thumb { grid-column: 2; height: 6px; }
    .status { display: flex; align-items: center; flex: none; height: 21px; padding: 2px 0 0; border-top: 1px solid #b0b0b0; font-size: 12px; line-height: 18px; }
    .cellbox { display: flex; align-items: center; gap: 5px; height: 16px; border-right: 1px solid #dcdcdc; white-space: nowrap; }
    .pages { width: 76px; padding-left: 10px; }
    .pad { width: 507px; }
    .template { flex: 1; padding-left: 8px; }
    .metrics { width: 216px; padding-left: 11px; }
    .metrics .size { margin-left: 14px; }
    .saved { width: 23px; padding-left: 8px; }
    .lang { width: 450px; padding-left: 186px; }
    .fit { width: 23px; padding-left: 5px; }
    .zoomer { width: 142px; padding-left: 10px; gap: 6px; }
    .percent { width: 49px; padding-left: 8px; border: 0; }
    .range { appearance: none; width: 97px; height: 16px; }
    .range::-webkit-slider-runnable-track { height: 2px; background: #9a9a9a; }
    .range::-webkit-slider-thumb { appearance: none; width: 8px; height: 8px; margin-top: -3px; border: 1px solid #555; border-radius: 50%; background: #fff; }
  `];
  render() {
    return html`<div class="screen">
      <header class="top">
        <div class="top-left"><button>Activities</button>
          <button class="app-name"><svg width="13" height="15" viewBox="0 0 13 15"><path d="M0 1a1 1 0 0 1 1-1h8l4 4v10a1 1 0 0 1-1 1H1a1 1 0 0 1-1-1z" fill="#e6e6e6"/><rect x="2.500" y="5.500" width="8" height="6" rx="1" fill="none" stroke="#333"/><path d="M4 7.500h1M6 7.500h3M4 9.500h1M6 9.500h3" stroke="#333"/></svg>LibreOffice Impress</button></div>
        <button class="top-mid">Apr 21  18:59<svg width="14" height="16" viewBox="0 0 14 16"><path d="M1.500 12.500c2-2 1.500-4 2-6.500.5-4 6.500-4 7 0 .5 2.500 0 4.500 2 6.500zM1.500 4l2-2.500M12.500 4l-2-2.500" fill="none" stroke="#f2f2f2"/><path d="M5 14h4l-2 2z" fill="#f2f2f2"/></svg></button>
        <div class="top-right"><svg width="14" height="14" viewBox="0 0 14 14"><path d="M0 4.500h3L7 1v12L3 9.500H0z" fill="#f2f2f2"/><path d="M8.500 4.500c1.500 1.500 1.500 3.500 0 5M10.500 3c3 2.500 3 5.500 0 8" fill="none" stroke="#f2f2f2"/></svg>
          <svg width="14" height="14" viewBox="0 0 14 14"><path d="M4 2a6 6 0 1 0 6 0M7 0v6" fill="none" stroke="#f2f2f2" stroke-width="1.500"/></svg></div>
      </header>
      <div class="main">
        <side-dock></side-dock>
        <div class="window">
          <div class="title"><h1>Untitled 1 - LibreOffice Impress</h1>
            <div class="controls">
              <button class="control" aria-label="Minimize"><svg width="10" height="10" viewBox="0 0 10 10"><path d="M1 7.500h8" stroke="#333"/></svg></button>
              <button class="control" aria-label="Restore"><svg width="10" height="10" viewBox="0 0 10 10"><path d="M1.500 3.500h5v5h-5z" fill="none" stroke="#333"/><path d="M4 1.500h4.500V7" fill="none" stroke="#999"/></svg></button>
              <button class="control" aria-label="Close"><svg width="10" height="10" viewBox="0 0 10 10"><path d="M1.500 1.500l7 7m0-7l-7 7" stroke="#333" stroke-width="1.500"/></svg></button>
            </div></div>
          <nav class="menus" aria-label="Menu bar">${["File", "Edit", "View", "Insert", "Format", "Slide", "Slide Show", "Tools", "Window", "Help"].map((m) => html`<button class="menu">${m}</button>`)}</nav>
          <div class="tools"><tool-bar .items=${standardBar}></tool-bar><tool-bar .items=${drawingBar}></tool-bar></div>
          <div class="work">
            <slide-panel></slide-panel>
            <main class="editor">
              <div class="canvas"><div class="slide"></div></div>
              <div class="vscroll"><div class="thumb"></div></div>
              <div class="hscroll"><div class="thumb"></div></div>
            </main>
            <property-panel></property-panel>
          </div>
          <footer class="status">
            <span class="cellbox pages">Slide 2 of 2</span><span class="cellbox pad"></span>
            <span class="cellbox template">Default</span>
            <span class="cellbox metrics"><svg width="15" height="12" viewBox="0 0 15 12"><path d="M6 3.500h8.500v7h-11V7" fill="none" stroke="#555"/><path d="M0 3.500h5M2.500 1v5" stroke="#e95420"/></svg>30.36 / 6.96
              <svg class="size" width="16" height="12" viewBox="0 0 16 12"><rect x="4.500" y="5.500" width="11" height="5" fill="#fff" stroke="#555"/><path d="M4 1.500h12M4.500 0v3M15.500 0v3M1.500 5v6M0 5.500h3M0 10.500h3" stroke="#e95420"/></svg>0.00 x 0.00</span>
            <span class="cellbox saved"><svg width="12" height="12" viewBox="0 0 12 12"><path d="M3.500.5h4v5H10L5.500 10 1 5.500h2.500z" fill="#a4d94b" stroke="#555"/><path d="M1 11.500h9" stroke="#555"/><circle cx="10.500" cy="1.500" r="1.500" fill="#c3162f"/></svg></span>
            <span class="cellbox lang">English (Hong Kong)</span>
            <span class="cellbox fit"><svg width="14" height="14" viewBox="0 0 14 14"><path d="M7 1v12M1 7h12" stroke="#e95420"/><path d="M4.500 3L7 0l2.500 3zM4.500 11L7 14l2.500-3zM3 4.500L0 7l3 2.500zM11 4.500L14 7l-3 2.500z" fill="#e95420"/></svg></span>
            <span class="cellbox zoomer"><button aria-label="Zoom out"><svg width="8" height="8" viewBox="0 0 8 8"><path d="M0 4h8" stroke="#666" stroke-width="2"/></svg></button>
              <input class="range" type="range" aria-label="Zoom" min="0" max="100" value="50" />
              <button aria-label="Zoom in"><svg width="8" height="8" viewBox="0 0 8 8"><path d="M0 4h8M4 0v8" stroke="#666" stroke-width="2"/></svg></button></span>
            <span class="cellbox percent">103%</span>
          </footer>
        </div>
      </div>
    </div>`;
  }
}
